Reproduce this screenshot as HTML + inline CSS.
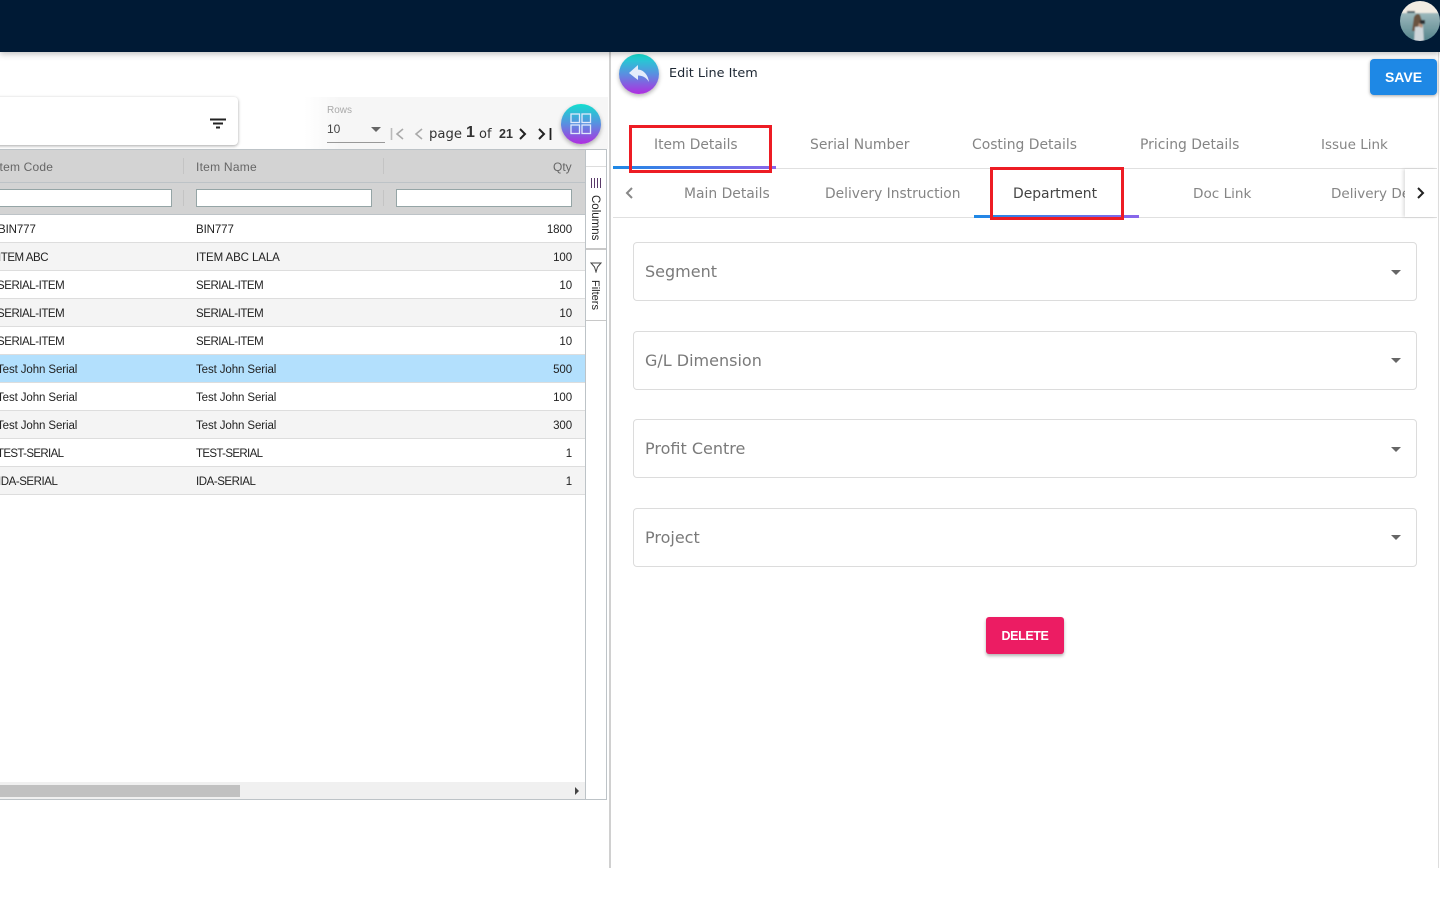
<!DOCTYPE html>
<html lang="en"><head><meta charset="utf-8"><title>Edit Line Item</title>
<style>
html,body{margin:0;padding:0;width:1440px;height:900px;overflow:hidden;background:#fff}
body{position:relative;font-family:"Liberation Sans",sans-serif}
.a,.t{position:absolute}
.t{white-space:nowrap;line-height:16px}
.g{font-size:11.5px;color:#222;letter-spacing:-.1px}
.n{letter-spacing:-.45px}
.row{position:absolute;left:0;width:585px;height:27px;border-bottom:1px solid #ddd}
.tab{font-family:"DejaVu Sans",sans-serif;font-size:13.9px;color:#858585}
.sel{position:absolute;left:633px;width:782px;height:57px;border:1px solid #dcdcdc;border-radius:4px;background:#fff}
.sel span{position:absolute;left:11px;top:19px;font-family:"DejaVu Sans",sans-serif;font-size:16px;line-height:20px;color:#7a7a7a}
.sel i{position:absolute;left:757px;top:27px;width:0;height:0;border:5px solid transparent;border-top-color:#666;border-bottom:0}
.grad{background:linear-gradient(180deg,#12dfcf 0%,#5a8fe0 50%,#b02de0 100%);border-radius:50%;box-shadow:0 2px 4px rgba(0,0,0,.3)}
.red{position:absolute;border:3px solid #ed1c24;box-sizing:border-box;z-index:5}
.ul{position:absolute;height:3px;background:linear-gradient(90deg,#1e88e5,#8a66ea)}
</style></head><body>

<div class="a" style="left:0;top:0;width:1440px;height:52px;background:#001a35;box-shadow:0 2px 6px rgba(0,0,0,.25);z-index:3"></div>
<svg class="a" style="left:1400px;top:1px;z-index:4" width="40" height="40" viewBox="0 0 40 40">
<defs><clipPath id="c"><circle cx="20" cy="20" r="20"/></clipPath>
<linearGradient id="sea" x1="0" y1="0" x2="0" y2="1"><stop offset="0" stop-color="#9db9bc"/><stop offset="1" stop-color="#4f7f88"/></linearGradient>
<filter id="b" x="-10%" y="-10%" width="120%" height="120%"><feGaussianBlur stdDeviation=".7"/></filter></defs>
<g clip-path="url(#c)"><g filter="url(#b)"><rect x="-2" y="-2" width="44" height="15" fill="#f1ece3"/><rect x="-2" y="12" width="44" height="30" fill="url(#sea)"/>
<rect x="7" y="10" width="8" height="2" fill="#3c5660"/>
<path d="M12 30L14 16Q17 11 20 14L22 20L21 30Z" fill="#6a5240"/><path d="M15 26L23 25L24 42H14Z" fill="#cfd6da"/><rect x="20" y="19" width="5" height="4" fill="#2b2f33"/><path d="M19 22L23 24L22 27L18 25Z" fill="#b58f78"/></g></g></svg>

<!-- search card -->
<div class="a" style="left:-10px;top:97px;width:248px;height:48px;background:#fff;border-radius:4px;box-shadow:0 1px 3px rgba(0,0,0,.35)"></div>
<svg class="a" style="left:210px;top:118px" width="16" height="11"><path d="M0 1.5H16M3 5.5H13M6 9.5H10" stroke="#222" stroke-width="2"/></svg>

<!-- pagination strip -->
<div class="a" style="left:304px;top:97px;width:304px;height:52px;background:linear-gradient(90deg,#fff,#f6f6f6 12%)"></div>
<div class="t" style="left:327px;top:103px;font-size:10px;color:#aaa">Rows</div>
<div class="t" style="left:327px;top:121px;font-size:12px;color:#444">10</div>
<div class="a" style="left:371px;top:127px;width:0;height:0;border:5px solid transparent;border-top-color:#666;border-bottom:0"></div>
<div class="a" style="left:327px;top:142px;width:58px;height:1px;background:#999"></div>
<svg class="a" style="left:390px;top:126px" width="165" height="16" fill="none">
<path d="M1.5 2V14" stroke="#bbb" stroke-width="1.6"/><path d="M13 3L7 8L13 13" stroke="#aaa" stroke-width="1.6"/>
<path d="M32 3L26 8L32 13" stroke="#aaa" stroke-width="1.6"/>
<path d="M130 3L135 8L130 13" stroke="#222" stroke-width="2"/>
<path d="M149 3L154 8L149 13" stroke="#222" stroke-width="2"/><path d="M160.500 2V14" stroke="#222" stroke-width="1.800"/></svg>
<div class="t" style="left:429px;top:127px;font-family:'DejaVu Sans',sans-serif;font-size:13.2px;color:#333">page</div>
<div class="t" style="left:466px;top:125px;font-size:16px;font-weight:bold;color:#333">1</div>
<div class="t" style="left:479px;top:127px;font-family:'DejaVu Sans',sans-serif;font-size:13px;color:#333">of</div>
<div class="t" style="left:499px;top:126px;font-size:12.5px;font-weight:bold;color:#333">21</div>
<div class="a grad" style="left:561px;top:104px;width:40px;height:40px;z-index:2"></div>
<svg class="a" style="left:570px;top:113px;z-index:2" width="22" height="22" fill="none" stroke="#dfe9fb" stroke-width="1.300"><rect x="1" y="1" width="8.500" height="8.500"/><rect x="12" y="1" width="8.500" height="8.500"/><rect x="1" y="12" width="8.500" height="8.500"/><rect x="12" y="12" width="8.500" height="8.500"/></svg>

<!-- grid -->
<div class="a" style="left:0;top:149px;width:607px;height:651px;box-sizing:border-box;border-top:1px solid #bdc3c7;border-bottom:1px solid #bdc3c7;border-right:1px solid #bdc3c7"></div>
<div class="a" style="left:0;top:150px;width:585px;height:32px;background:#d3d3d3;border-bottom:1px solid #bdc3c7"></div>
<div class="a" style="left:0;top:183px;width:585px;height:31px;background:#d3d3d3;border-bottom:1px solid #bdc3c7"></div>
<div class="a" style="left:183px;top:158px;width:1px;height:16px;background:#c4c4c4"></div>
<div class="a" style="left:383px;top:158px;width:1px;height:16px;background:#c4c4c4"></div>
<div class="a" style="left:183px;top:190px;width:1px;height:16px;background:#c4c4c4"></div>
<div class="a" style="left:383px;top:190px;width:1px;height:16px;background:#c4c4c4"></div>
<div class="t" style="left:-4px;top:159px;font-size:12px;color:#666;letter-spacing:.2px">Item Code</div>
<div class="t" style="left:196px;top:159px;font-size:12px;color:#666;letter-spacing:.25px">Item Name</div>
<div class="t" style="left:553px;top:159px;font-size:12px;color:#666">Qty</div>
<div class="a" style="left:-2px;top:189px;width:172px;height:16px;background:#fff;border:1px solid #95a5a6"></div>
<div class="a" style="left:196px;top:189px;width:174px;height:16px;background:#fff;border:1px solid #95a5a6"></div>
<div class="a" style="left:396px;top:189px;width:174px;height:16px;background:#fff;border:1px solid #95a5a6"></div>

<div class="row" style="top:215px;background:#fff"></div>
<div class="row" style="top:243px;background:#f4f4f4"></div>
<div class="row" style="top:271px;background:#fff"></div>
<div class="row" style="top:299px;background:#f4f4f4"></div>
<div class="row" style="top:327px;background:#fff"></div>
<div class="row" style="top:355px;background:#b3e0fd"></div>
<div class="row" style="top:383px;background:#fff"></div>
<div class="row" style="top:411px;background:#f4f4f4"></div>
<div class="row" style="top:439px;background:#fff"></div>
<div class="row" style="top:467px;background:#f4f4f4"></div>

<div class="t g" style="left:-2px;top:222px">BIN777</div><div class="t g" style="left:196px;top:222px">BIN777</div><div class="t g" style="right:868px;top:222px">1800</div>
<div class="t g n" style="left:-2px;top:250px">ITEM ABC</div><div class="t g" style="left:196px;top:250px">ITEM ABC LALA</div><div class="t g" style="right:868px;top:250px">100</div>
<div class="t g n" style="left:-3px;top:278px">SERIAL-ITEM</div><div class="t g n" style="left:196px;top:278px">SERIAL-ITEM</div><div class="t g" style="right:868px;top:278px">10</div>
<div class="t g n" style="left:-3px;top:306px">SERIAL-ITEM</div><div class="t g n" style="left:196px;top:306px">SERIAL-ITEM</div><div class="t g" style="right:868px;top:306px">10</div>
<div class="t g n" style="left:-3px;top:334px">SERIAL-ITEM</div><div class="t g n" style="left:196px;top:334px">SERIAL-ITEM</div><div class="t g" style="right:868px;top:334px">10</div>
<div class="t g" style="left:-3px;top:362px">Test John Serial</div><div class="t g" style="left:196px;top:362px">Test John Serial</div><div class="t g" style="right:868px;top:362px">500</div>
<div class="t g" style="left:-3px;top:390px">Test John Serial</div><div class="t g" style="left:196px;top:390px">Test John Serial</div><div class="t g" style="right:868px;top:390px">100</div>
<div class="t g" style="left:-3px;top:418px">Test John Serial</div><div class="t g" style="left:196px;top:418px">Test John Serial</div><div class="t g" style="right:868px;top:418px">300</div>
<div class="t g" style="left:-3px;top:446px;letter-spacing:-.65px">TEST-SERIAL</div><div class="t g" style="left:196px;top:446px;letter-spacing:-.65px">TEST-SERIAL</div><div class="t g" style="right:868px;top:446px">1</div>
<div class="t g n" style="left:-2px;top:474px">IDA-SERIAL</div><div class="t g n" style="left:196px;top:474px">IDA-SERIAL</div><div class="t g" style="right:868px;top:474px">1</div>

<!-- side bar -->
<div class="a" style="left:585px;top:150px;width:1px;height:649px;background:#bdc3c7"></div>
<div class="a" style="left:586px;top:166px;width:20px;height:1px;background:#ddd"></div>
<div class="a" style="left:586px;top:248px;width:20px;height:2px;background:#c8c8c8"></div>
<div class="a" style="left:586px;top:320px;width:20px;height:1px;background:#c8c8c8"></div>
<svg class="a" style="left:591px;top:178px" width="10" height="10"><path d="M.5 0V10M3.500 0V10M6.500 0V10M9.500 0V10" stroke="#5a3a6a" stroke-width="1"/></svg>
<div class="t" style="left:588px;top:195px;font-size:11.5px;color:#222;writing-mode:vertical-rl;line-height:14px">Columns</div>
<svg class="a" style="left:590px;top:262px" width="12" height="11" fill="none"><path d="M1 1H11L7.500 5L6 10L4.500 5Z" stroke="#444" stroke-width="1"/></svg>
<div class="t" style="left:588px;top:280px;font-size:11px;color:#222;writing-mode:vertical-rl;line-height:14px">Filters</div>

<!-- scrollbar -->
<div class="a" style="left:0;top:782px;width:585px;height:17px;background:#f0f0f0"></div>
<div class="a" style="left:0;top:785px;width:240px;height:12px;background:#c1c1c1"></div>
<div class="a" style="left:575px;top:787px;width:0;height:0;border:4px solid transparent;border-left-color:#444;border-right:0"></div>

<!-- right panel -->
<div class="a" style="left:609px;top:52px;width:2px;height:816px;background:#d0d0d0"></div>
<div class="a" style="left:1438px;top:52px;width:1px;height:816px;background:#ddd"></div>
<div class="a grad" style="left:619px;top:54px;width:40px;height:40px"></div>
<svg class="a" style="left:628px;top:64px" width="22" height="20"><path d="M10 1L1 9L10 16V11.500C14 11.500 18 13 21 18C20 11 16 6 10 5.500Z" fill="#e4ecfb"/></svg>
<div class="t" style="left:669px;top:66px;font-family:'DejaVu Sans',sans-serif;font-size:12.8px;color:#1d2733">Edit Line Item</div>
<div class="a" style="left:1370px;top:59px;width:67px;height:36px;background:#1e88e5;border-radius:4px;box-shadow:0 1px 3px rgba(0,0,0,.35)"></div>
<div class="t" style="left:1370px;top:69px;width:67px;text-align:center;font-size:14px;font-weight:bold;color:#fff">SAVE</div>

<div class="a" style="left:613px;top:168px;width:824px;height:1px;background:#e0e0e0"></div>
<div class="ul" style="left:613px;top:166px;width:163px"></div>
<div class="t tab" style="left:654px;top:137px;font-size:13.8px">Item Details</div>
<div class="t tab" style="left:810px;top:137px">Serial Number</div>
<div class="t tab" style="left:972px;top:137px">Costing Details</div>
<div class="t tab" style="left:1140px;top:137px">Pricing Details</div>
<div class="t tab" style="left:1321px;top:137px;font-size:13.5px">Issue Link</div>
<div class="red" style="left:629px;top:125px;width:143px;height:48px"></div>

<div class="a" style="left:613px;top:217px;width:824px;height:1px;background:#e0e0e0"></div>
<div class="ul" style="left:974px;top:215px;width:165px"></div>
<svg class="a" style="left:625px;top:187px" width="8" height="12" fill="none"><path d="M7 1L2 6L7 11" stroke="#888" stroke-width="2"/></svg>
<div class="t tab" style="left:684px;top:186px">Main Details</div>
<div class="t tab" style="left:825px;top:186px;font-size:13.8px">Delivery Instruction</div>
<div class="t tab" style="left:1013px;top:186px;color:#444">Department</div>
<div class="t tab" style="left:1193px;top:186px;font-size:13.6px">Doc Link</div>
<div class="a" style="left:1331px;top:180px;width:74px;height:26px;overflow:hidden"><div class="t tab" style="left:0;top:6px;font-size:13.5px">Delivery Details</div></div>
<div class="a" style="left:1405px;top:169px;width:32px;height:48px;background:#fff;box-shadow:-2px 0 3px rgba(0,0,0,.12)"></div>
<svg class="a" style="left:1417px;top:187px" width="8" height="12" fill="none"><path d="M1 1L6 6L1 11" stroke="#222" stroke-width="2"/></svg>
<div class="red" style="left:990px;top:167px;width:134px;height:53px"></div>

<div class="sel" style="top:242px"><span>Segment</span><i></i></div>
<div class="sel" style="top:331px"><span>G/L Dimension</span><i style="top:26px"></i></div>
<div class="sel" style="top:419px"><span>Profit Centre</span><i></i></div>
<div class="sel" style="top:508px"><span>Project</span><i style="top:26px"></i></div>

<div class="a" style="left:986px;top:617px;width:78px;height:37px;background:#ec1c63;border-radius:3px;box-shadow:0 2px 3px rgba(0,0,0,.3)"></div>
<div class="t" style="left:986px;top:628px;width:78px;text-align:center;font-size:12.5px;font-weight:bold;color:#fff;letter-spacing:-.4px">DELETE</div>

</body></html>
